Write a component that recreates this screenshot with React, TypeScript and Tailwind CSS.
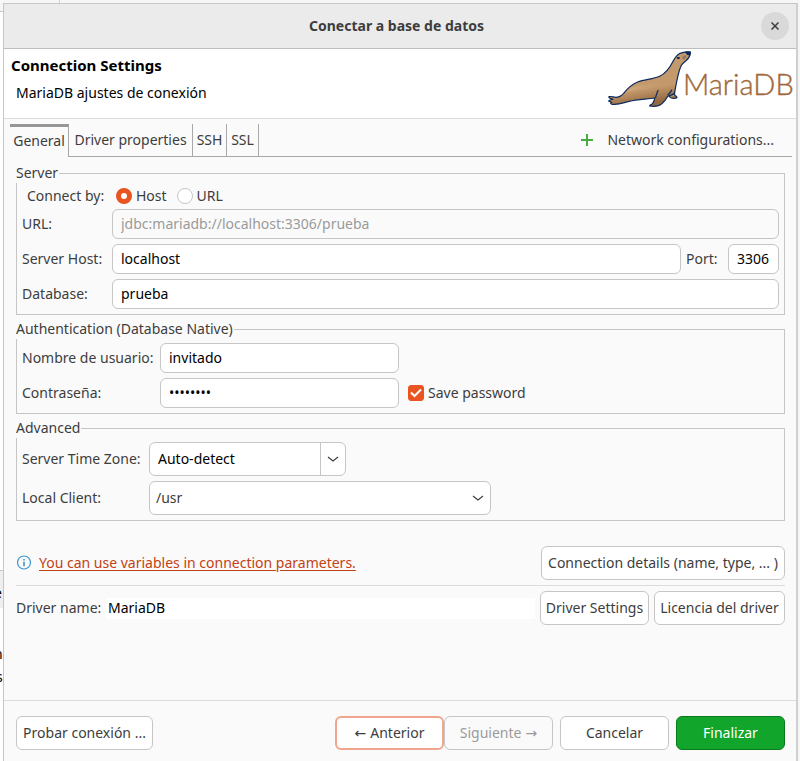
import type { ButtonHTMLAttributes, InputHTMLAttributes, ReactNode } from "react";

const fieldStyle =
  "h-[30px] min-w-0 rounded-md border border-[#c6c6c6] bg-white px-2 pb-0.5 text-black outline-none disabled:bg-[#fafafa] disabled:text-[#9a9a9a]";

function Field({ className = "", ...props }: InputHTMLAttributes<HTMLInputElement>) {
  return <input className={`${fieldStyle} ${className}`} {...props} />;
}

function Button({ className = "", ...props }: ButtonHTMLAttributes<HTMLButtonElement>) {
  return (
    <button
      type="button"
      className={`h-[34px] shrink-0 rounded-md border whitespace-nowrap ${className}`}
      {...props}
    />
  );
}

const plain = "border-[#c6c6c6] bg-white";

function Group({ title, children }: { title: string; children: ReactNode }) {
  return (
    <fieldset className="min-w-0 border border-[#c6c6c6] px-[5px] pt-1 pb-[5px]">
      <legend className="-ml-1.5 pr-px pb-0.5 leading-[17px]">{title}</legend>
      {children}
    </fieldset>
  );
}

function Chevron() {
  return (
    <svg width="12" height="8" viewBox="0 0 12 8" fill="none" stroke="#3d3d3d" strokeWidth="1.2" aria-hidden="true">
      <path d="M1 2 6 6l5-4" />
    </svg>
  );
}

function MariaLogo() {
  return (
    <svg width="190" height="62" viewBox="0 0 190 62" role="img" aria-label="MariaDB">
      <defs>
        <linearGradient id="fur" x1="0" y1="0" x2="0.25" y2="1">
          <stop offset="0" stopColor="#c49a6c" />
          <stop offset="0.74" stopColor="#c49a6c" />
          <stop offset="1" stopColor="#946740" />
        </linearGradient>
        <linearGradient id="belly" x1="0" y1="0" x2="1" y2="0.5">
          <stop offset="0" stopColor="#e0bd94" />
          <stop offset="1" stopColor="#c49a6c" stopOpacity="0" />
        </linearGradient>
      </defs>
      <g transform="translate(-6 -4) scale(.33333)" stroke="#0b2a5e" strokeWidth="3.6" strokeLinejoin="round" strokeLinecap="round">
        <path
          fill="url(#fur)"
          d="M205 147c1 6 3 10 9 12 7 2 13 1 17-1 0-4-3-5-6-6-2-4-1-9-2-16z"
        />
        <path
          fill="url(#fur)"
          d="M271 21c-9-1-22 0-33 5-10 5-14 14-20 25-9 18-21 34-39 43-19 9-45 9-66 17-18 7-31 20-42 34-7 8-15 12-24 12-7 0-12-4-20-2-3 3 7 7 12 8-5 1-12 1-13 5 0 2 7 2 9 4-5 1-3 6 4 6 18 2 31-5 48-9 26-7 50-6 77-10 0 7-3 12-6 16-4 5-9 5-9 8 15 3 30-1 38-8 8-6 12-14 16-21 10-5 20-4 21-12 4-22 9-55 18-77 3-8 10-13 16-18 7-6 12-14 13-22z"
        />
        <path d="M76 143c14-14 34-21 58-23 22-2 37-7 50-15-12 22-34 29-60 29-20 0-35 5-48 9z" fill="url(#belly)" stroke="none" />
        <path d="M167 157c1-8 5-14 7-21" fill="none" />
        <path d="M204 149c4-4 9-8 11-14" fill="none" />
        <path d="M257 21l14 0-2 8c-5 1-9-2-12-8z" fill="#0b2a5e" />
        <ellipse cx="235" cy="39" rx="5" ry="3" fill="#0b2a5e" stroke="none" />
        <ellipse cx="253" cy="37" rx="7" ry="5" transform="rotate(-45 253 37)" fill="#8d7b68" stroke="none" />
      </g>
      <text
        x="77"
        y="46"
        fill="#a1693a"
        stroke="#a1693a"
        strokeWidth="0.4"
        fontFamily="Lato, sans-serif"
        fontWeight="300"
        fontSize="29"
      >
        MariaDB
      </text>
    </svg>
  );
}

const tabs = [
  { name: "Driver properties", width: "w-[124px]" },
  { name: "SSH", width: "w-[34px]" },
  { name: "SSL", width: "w-8" },
];

function Tabs() {
  return (
    <div className="flex h-[33px] pr-1 pl-1.5" role="tablist">
      <button
        type="button"
        role="tab"
        aria-selected="true"
        className="w-[59px] border-t-[3px] border-r border-t-[#969696] border-r-[#a8a8a8] pb-0.5 text-center"
      >
        General
      </button>
      <div className="flex flex-1 items-stretch border-b border-[#a8a8a8]">
        {tabs.map((tab) => (
          <button
            key={tab.name}
            type="button"
            role="tab"
            aria-selected="false"
            className={`border-r border-[#a8a8a8] whitespace-nowrap ${tab.width}`}
          >
            {tab.name}
          </button>
        ))}
        <button type="button" className="mr-[18px] ml-auto flex items-center gap-[14px] whitespace-nowrap">
          <svg width="12" height="12" viewBox="0 0 12 12" stroke="#4ba93f" strokeWidth="2" aria-hidden="true">
            <path d="M6 0v12M0 6h12" />
          </svg>
          Network configurations...
        </button>
      </div>
    </div>
  );
}

export default function App() {
  return (
    <div className="flex min-h-screen flex-col overflow-hidden bg-[#fafafa] font-['Noto_Sans',sans-serif] text-sm leading-5 text-[#3d3d3d]">
      <div className="flex h-[3px] bg-[#f6f6f6]">
        <div className="w-[60px] border-r border-[#d0d0d0]" />
      </div>
      <div className="flex flex-1">
        <div className="flex w-[3px] shrink-0 flex-col overflow-hidden bg-white text-black" aria-hidden="true">
          <div className="h-[9px] border-b border-[#c6c6c6] bg-[#f6f6f6]" />
          <div className="mt-[558px] h-[38px] border-t border-[#c6c6c6] bg-[#f0efee] pt-3">
            <div className="-ml-1.5">e</div>
          </div>
          <div className="mt-9 -ml-1.5">n</div>
          <div className="mt-[3px] -ml-1">s</div>
        </div>
        <main className="flex min-w-0 flex-1 flex-col border-t border-r-2 border-l border-t-[#c6c6c6] border-r-[#cfcfcf] border-l-[#c6c6c6]">
          <header className="grid h-[45px] grid-cols-[1fr_auto_1fr] items-center border-b border-[#bdbdbd] bg-[#ebebeb] pr-[7px]">
            <h1 className="col-start-2 font-bold">Conectar a base de datos</h1>
            <button
              type="button"
              aria-label="Cerrar"
              className="flex size-7 items-center justify-center justify-self-end rounded-full bg-[#d9d9d9]"
            >
              <svg width="8" height="8" viewBox="0 0 8 8" stroke="#3d3d3d" strokeWidth="1.5" aria-hidden="true">
                <path d="M.5.5l7 7M7.5.5l-7 7" />
              </svg>
            </button>
          </header>

          <section className="flex h-[70px] justify-between border-b border-[#dcdcdc] bg-white pl-[7px] text-black">
            <div className="pt-1.5">
              <h2 className="text-[15px] leading-5 font-bold">Connection Settings</h2>
              <p className="pt-2 pl-[5px]">MariaDB ajustes de conexión</p>
            </div>
            <MariaLogo />
          </section>

          <div className="pt-[5px]">
            <Tabs />
          </div>

          <div className="flex flex-1 flex-col pt-[7px] pr-[11px] pl-3">
            <div className="flex flex-col gap-[5px]">
              <Group title="Server">
                <div className="flex h-[17px] items-center pl-[5px]" role="radiogroup" aria-labelledby="connect-by">
                  <span id="connect-by" className="w-[89px]">
                    Connect by:
                  </span>
                  <label className="flex items-center gap-1">
                    <input
                      type="radio"
                      name="mode"
                      defaultChecked
                      className="size-4 appearance-none rounded-full border border-[#c6c6c6] bg-white checked:border-[5px] checked:border-[#e95420]"
                    />
                    Host
                  </label>
                  <label className="ml-2.5 flex items-center gap-1">
                    <input
                      type="radio"
                      name="mode"
                      className="size-4 appearance-none rounded-full border border-[#c6c6c6] bg-white checked:border-[5px] checked:border-[#e95420]"
                    />
                    URL
                  </label>
                </div>
                <div className="mt-[5px] grid grid-cols-[90px_1fr] items-center gap-y-[5px]">
                  <label htmlFor="url">URL:</label>
                  <Field id="url" disabled defaultValue="jdbc:mariadb://localhost:3306/prueba" />
                  <label htmlFor="host">Server Host:</label>
                  <div className="flex items-center">
                    <Field id="host" defaultValue="localhost" className="flex-1" />
                    <label htmlFor="port" className="w-[47px] pl-[5px]">
                      Port:
                    </label>
                    <Field id="port" defaultValue="3306" className="w-[51px]" />
                  </div>
                  <label htmlFor="database">Database:</label>
                  <Field id="database" defaultValue="prueba" />
                </div>
              </Group>

              <Group title="Authentication (Database Native)">
                <div className="grid grid-cols-[138px_239px_auto] items-center justify-start gap-y-[5px]">
                  <label htmlFor="user">Nombre de usuario:</label>
                  <Field id="user" defaultValue="invitado" />
                  <label htmlFor="password" className="col-start-1">
                    Contraseña:
                  </label>
                  <Field id="password" type="password" defaultValue="invitado" />
                  <label className="ml-[9px] flex items-center gap-1">
                    <span className="grid size-4 place-items-center">
                      <input
                        type="checkbox"
                        defaultChecked
                        className="peer col-start-1 row-start-1 size-4 appearance-none rounded-[3px] border border-[#c6c6c6] bg-white checked:border-[#e95420] checked:bg-[#e95420]"
                      />
                      <svg
                        width="12"
                        height="10"
                        viewBox="0 0 12 10"
                        fill="none"
                        stroke="#fff"
                        strokeWidth="2"
                        aria-hidden="true"
                        className="pointer-events-none col-start-1 row-start-1 hidden peer-checked:block"
                      >
                        <path d="M1 4.5 4.5 8 11 1.5" />
                      </svg>
                    </span>
                    Save password
                  </label>
                </div>
              </Group>

              <Group title="Advanced">
                <div className="grid grid-cols-[127px_auto] items-center justify-start gap-y-[5px]">
                  <label htmlFor="zone">Server Time Zone:</label>
                  <div className="flex h-[34px] w-[197px] overflow-hidden rounded-md border border-[#c6c6c6] bg-white">
                    <input id="zone" defaultValue="Auto-detect" className="min-w-0 flex-1 px-2 text-black outline-none" />
                    <button
                      type="button"
                      aria-label="Server Time Zone"
                      className="flex w-[25px] items-center justify-center border-l border-[#c6c6c6]"
                    >
                      <Chevron />
                    </button>
                  </div>
                  <label htmlFor="client">Local Client:</label>
                  <div className="grid w-[342px] items-center">
                    <select
                      id="client"
                      className="col-start-1 row-start-1 h-[34px] appearance-none rounded-md border border-[#c6c6c6] bg-white px-1.5"
                    >
                      <option>/usr</option>
                    </select>
                    <span className="pointer-events-none col-start-1 row-start-1 mr-[7px] justify-self-end">
                      <Chevron />
                    </span>
                  </div>
                </div>
              </Group>
            </div>

            <div className="mt-[25px] flex items-center border-b border-[#dcdcdc] pb-[5px]">
              <svg width="16" height="16" viewBox="0 0 16 16" fill="none" stroke="#3d94d1" strokeWidth="1.2" aria-hidden="true">
                <circle cx="8" cy="7.5" r="6.5" />
                <path d="M8 4v1.6M8 6.8v4.4" strokeWidth="1.6" />
              </svg>
              <a href="#variables" className="ml-[7px] text-[#c34113] underline underline-offset-2">
                You can use variables in connection parameters.
              </a>
              <Button className={`${plain} ml-auto w-[244px]`}>Connection details (name, type, ... )</Button>
            </div>

            <div className="flex items-center gap-[5px] pt-[5px]">
              <label htmlFor="driver" className="w-[85px] whitespace-nowrap">
                Driver name:
              </label>
              <input
                id="driver"
                readOnly
                defaultValue="MariaDB"
                className="h-[21px] min-w-0 flex-1 bg-white px-0.5 pb-0.5 text-black outline-none"
              />
              <Button className={`${plain} w-[109px]`}>Driver Settings</Button>
              <Button className={`${plain} w-[131px]`}>Licencia del driver</Button>
            </div>
          </div>

          <footer className="flex items-center border-t border-[#dcdcdc] pt-[15px] pr-[11px] pb-[11px] pl-3">
            <Button className={`${plain} w-[137px]`}>Probar conexión ...</Button>
            <Button className="ml-auto flex w-[109px] items-center justify-center gap-1 border-2 border-[#f0a58d] bg-white">
              <span className="font-['DejaVu_Sans',sans-serif]">←</span>
              Anterior
            </Button>
            <Button
              disabled
              className="flex w-[109px] items-center justify-center gap-1 border-[#c6c6c6] bg-[#fafafa] text-[#9a9a9a]"
            >
              Siguiente
              <span className="font-['DejaVu_Sans',sans-serif]">→</span>
            </Button>
            <Button className={`${plain} ml-[7px] w-[109px]`}>Cancelar</Button>
            <Button className="ml-[7px] w-[109px] border-[#0b7a1c] bg-[#12a52b] text-white">Finalizar</Button>
          </footer>
        </main>
        <div className="w-0.5 shrink-0 bg-[#f6f6f6]" />
      </div>
    </div>
  );
}
